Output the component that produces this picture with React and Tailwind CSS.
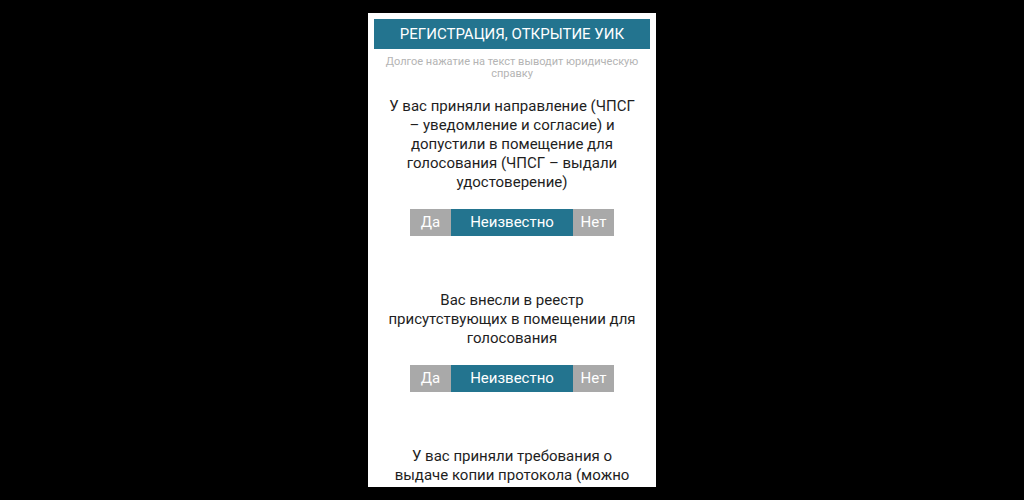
const QUESTIONS = [
  'У вас приняли направление (ЧПСГ – уведомление и согласие) и допустили в помещение для голосования (ЧПСГ – выдали удостоверение)',
  'Вас внесли в реестр присутствующих в помещении для голосования',
  'У вас приняли требования о выдаче копии протокола (можно получить заверенную копию)',
]

function Choice() {
  return (
    <div className="mt-[17px] flex h-[27px] justify-center text-[15px] leading-[27px] text-white">
      <span className="w-[41px] bg-[#a9a9a9] text-center">Да</span>
      <span className="w-[122px] bg-[#23748f] text-center">Неизвестно</span>
      <span className="w-[41px] bg-[#a9a9a9] text-center">Нет</span>
    </div>
  )
}

export default function App() {
  return (
    <div className="flex h-[500px] w-[1024px] justify-center bg-black pt-[13px] font-['Roboto',sans-serif]">
      <div className="h-[474px] w-[288px] overflow-hidden bg-white px-[6px] pt-[6px]">
        <div className="flex h-[30px] items-center justify-center bg-[#23748f] text-[15px] text-white">
          РЕГИСТРАЦИЯ, ОТКРЫТИЕ УИК
        </div>
        <p className="mx-auto mt-[7px] w-[262px] text-center text-[11px] leading-[12px] text-[#b4b4b4]">
          Долгое нажатие на текст выводит юридическую справку
        </p>
        <div className="mt-[17px] flex flex-col gap-[55px] px-[10px]">
          {QUESTIONS.map((q) => (
            <div key={q}>
              <p className="text-center text-[15px] leading-[19px] text-[#1e1e1e]">{q}</p>
              <Choice />
            </div>
          ))}
        </div>
      </div>
    </div>
  )
}
